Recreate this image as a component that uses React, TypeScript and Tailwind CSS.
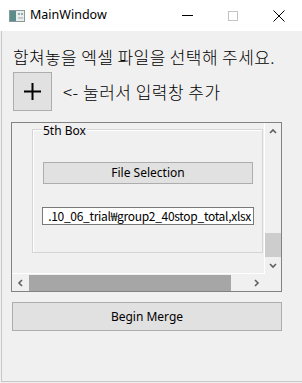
import React from "react";

const UI = '"Noto Sans", "Noto Sans CJK KR", sans-serif';
const KR = '"Noto Sans CJK KR", "Noto Sans", sans-serif';

function Chevron({ dir }: { dir: "up" | "down" | "left" | "right" }) {
  const paths: Record<string, string> = {
    up: "M1 5 L4 2 L7 5",
    down: "M1 2 L4 5 L7 2",
    left: "M5 1 L2 4 L5 7",
    right: "M2 1 L5 4 L2 7",
  };
  return (
    <svg width="8" height="8" viewBox="0 0 8 8">
      <path d={paths[dir]} fill="none" stroke="#606060" strokeWidth="1.6" />
    </svg>
  );
}

export default function App() {
  return (
    <div className="w-[302px] h-[383px] bg-[#f0f0f0] flex flex-col overflow-hidden" style={{ fontFamily: UI }}>
      {/* Title bar */}
      <div className="h-[31px] bg-white flex items-center shrink-0">
        <div className="ml-[9px] w-[16px] h-[12px] flex items-center">
          <svg width="16" height="12" viewBox="0 0 16 12">
            <rect x="0.5" y="0.5" width="15" height="11" fill="#e8eeee" stroke="#8a9898" />
            <rect x="1" y="1" width="6" height="10" fill="#5c8c8a" />
            <rect x="9" y="3" width="2" height="2" fill="#9aa8a8" />
            <rect x="12" y="3" width="2" height="2" fill="#9aa8a8" />
            <rect x="9" y="7" width="5" height="2" fill="#c0cccc" />
          </svg>
        </div>
        <span className="ml-[5px] text-[12.5px] leading-none text-black" style={{ fontFamily: UI }}>MainWindow</span>
        <div className="ml-auto flex items-center">
          <div className="w-[46px] h-[31px] flex items-center justify-center">
            <div className="w-[11px] h-[1px] bg-black" />
          </div>
          <div className="w-[46px] h-[31px] flex items-center justify-center">
            <div className="w-[10px] h-[10px] border border-[#c4c4c4]" />
          </div>
          <div className="w-[46px] h-[31px] flex items-center justify-center">
            <svg width="12" height="12" viewBox="0 0 12 12">
              <path d="M0.5 0.5 L11.5 11.5 M11.5 0.5 L0.5 11.5" stroke="#000" strokeWidth="1" />
            </svg>
          </div>
        </div>
      </div>

      {/* Body */}
      <div className="h-[351px] border-l border-b border-[#c8c8c8] ml-[1px] flex flex-col">
        <div
          className="mt-[16px] ml-[11px] text-[17px] leading-[20px] tracking-[0.4px] font-light text-black whitespace-nowrap"
          style={{ fontFamily: KR }}
        >
          합쳐놓을 엑셀 파일을 선택해 주세요.
        </div>
        <div className="mt-[5px] ml-[11px] flex items-center">
          <div className="w-[39px] h-[39px] bg-[#e1e1e1] border border-[#adadad] flex items-center justify-center">
            <svg width="17" height="17" viewBox="0 0 17 17">
              <rect x="0" y="7.5" width="17" height="2" fill="#000" />
              <rect x="7.5" y="0" width="2" height="17" fill="#000" />
            </svg>
          </div>
          <span
            className="ml-[11px] text-[17px] leading-[20px] tracking-[0.5px] font-light text-black whitespace-nowrap"
            style={{ fontFamily: KR }}
          >
            &lt;- 눌러서 입력창 추가
          </span>
        </div>

        {/* Scroll area */}
        <div className="mt-[11px] ml-[9px] w-[271px] h-[170px] border border-[#828282] flex flex-col">
          <div className="flex h-[151px]">
            <div className="w-[253px] h-[151px] border-r border-b border-white overflow-hidden pl-[20px] pt-[6px]">
              {/* Group box */}
              <div className="relative w-[231px] h-[124px] border border-[#d5d5d5] shadow-[inset_1px_1px_0_#ffffff] pl-[9px] pt-[32px] flex flex-col">
                <span className="absolute left-[9px] top-[-5px] px-[1px] bg-[#f0f0f0] text-[12px] leading-[12px] text-black">
                  5th Box
                </span>
                <div className="ml-[1px] w-[210px] h-[22px] bg-[#e1e1e1] border border-[#adadad] flex items-center justify-center text-[12px] text-black">
                  File Selection
                </div>
                <div className="mt-[23px] w-[212px] h-[18px] bg-white border border-[#7a7a7a] flex items-center justify-end overflow-hidden pr-[2px]">
                  <span className="text-[12px] leading-none tracking-[-0.3px] text-black whitespace-nowrap" style={{ fontFamily: KR }}>
                    .10_06_trial₩group2_40stop_total,xlsx
                  </span>
                </div>
              </div>
            </div>
            {/* vertical scrollbar */}
            <div className="w-[16px] h-[151px] bg-[#f0f0f0] flex flex-col">
              <div className="h-[17px] flex items-center justify-center">
                <Chevron dir="up" />
              </div>
              <div className="flex-1 flex flex-col justify-end">
                <div className="h-[24px] bg-[#cdcdcd]" />
              </div>
              <div className="h-[17px] flex items-center justify-center">
                <Chevron dir="down" />
              </div>
            </div>
          </div>
          {/* horizontal scrollbar */}
          <div className="flex h-[17px]">
            <div className="w-[253px] h-[17px] bg-[#f0f0f0] flex items-center">
              <div className="w-[17px] h-[17px] flex items-center justify-center">
                <Chevron dir="left" />
              </div>
              <div className="flex-1 h-[16px] mt-[1px] flex">
                <div className="w-[202px] h-[16px] bg-[#a6a6a6]" />
              </div>
              <div className="w-[17px] h-[17px] flex items-center justify-center">
                <Chevron dir="right" />
              </div>
            </div>
            <div className="w-[16px] h-[17px] bg-[#f0f0f0]" />
          </div>
        </div>

        <div className="mt-[10px] ml-[10px] w-[270px] h-[29px] bg-[#e1e1e1] border border-[#adadad] flex items-center justify-center text-[12px] text-black">
          Begin Merge
        </div>
      </div>
    </div>
  );
}
